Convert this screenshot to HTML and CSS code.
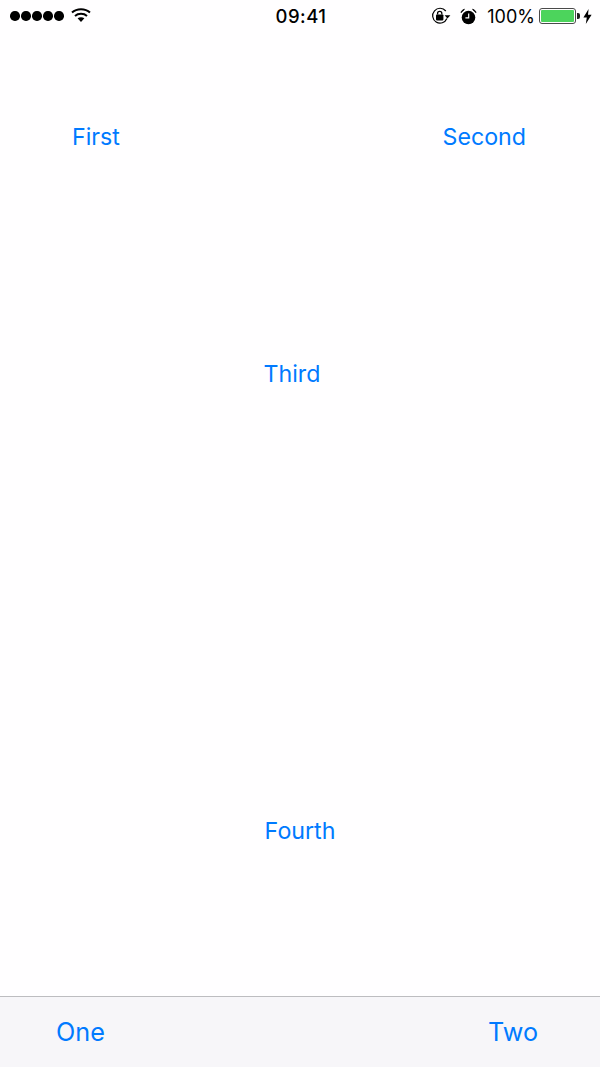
FILE: index.html
```html
<!DOCTYPE html>
<html lang="en">
<head>
    <meta charset="UTF-8">
    <meta name="viewport" content="width=device-width, initial-scale=1.0">
    <title>Buttons</title>
    <link rel="stylesheet" href="styles.css">
</head>
<body>
    <div class="status">
        <div class="status__left">
            <div class="dots"><i></i><i></i><i></i><i></i><i></i></div>
            <svg class="wifi" width="20" height="16" viewBox="0 0 20 16">
                <path d="M1 5.6C5.8 1.2 14.2 1.2 19 5.6" fill="none" stroke="#000" stroke-width="2"/>
                <path d="M4 8.9C7.2 6 12.8 6 16 8.9" fill="none" stroke="#000" stroke-width="2"/>
                <path d="M6.6 11.3C8.4 9.9 11.6 9.9 13.4 11.3L10 15Z" fill="#000"/>
            </svg>
        </div>
        <div class="status__time">09:41</div>
        <div class="status__right">
            <svg class="lock" width="20" height="18" viewBox="0 0 20 18">
                <path d="M15.9 11.5A7.4 7.4 0 1 1 14.8 4" fill="none" stroke="#000" stroke-width="1.2"/>
                <path d="M13.6 8.2H19.4L16.5 11.4Z" fill="#000"/>
                <rect x="5" y="7.4" width="7.4" height="6" rx="0.8" fill="#000"/>
                <path d="M6.6 7.6V6.2C6.6 3.7 10.8 3.7 10.8 6.2V7.6" fill="none" stroke="#000" stroke-width="1.3"/>
            </svg>
            <svg class="alarm" width="17" height="17" viewBox="0 0 17 17">
                <circle cx="8.5" cy="9.5" r="6.8" fill="#000"/>
                <path d="M1 4.6C1.4 2.8 2.8 1.6 4.4 1.4ZM16 4.6C15.6 2.8 14.2 1.6 12.6 1.4Z" fill="#000" stroke="#000"/>
                <path d="M8.7 5.4V9.9H5.4" fill="none" stroke="#fff" stroke-width="1.2"/>
            </svg>
            <span class="percent">100%</span>
            <div class="battery">
                <div class="battery__body"><div class="battery__level"></div></div>
                <div class="battery__tip"></div>
            </div>
            <svg class="bolt" width="9" height="15" viewBox="0 0 9 15">
                <path d="M5.6 0L0.4 8.4H3.8L2.8 15L8.6 5.8H5L5.6 0Z" fill="#000"/>
            </svg>
        </div>
    </div>

    <div class="content">
        <div class="row row--top">
            <button class="btn btn--first">First</button>
            <button class="btn btn--second">Second</button>
        </div>
        <div class="row row--third">
            <button class="btn">Third</button>
        </div>
        <div class="row row--fourth">
            <button class="btn">Fourth</button>
        </div>
    </div>

    <div class="toolbar">
        <button class="btn btn--bar">One</button>
        <button class="btn btn--bar">Two</button>
    </div>
</body>
</html>
```

FILE: styles.css
```css
*{
    margin: 0;
    padding: 0;
    box-sizing: border-box;
}

html, body {
    height: 100%;
}

body {
    display: flex;
    flex-direction: column;
    height: 1067px;
    overflow: hidden;
    background: #fffeff;
    font-family: Inter, "Liberation Sans", sans-serif;
}

/* status bar */
.status {
    display: grid;
    grid-template-columns: 1fr auto 1fr;
    align-items: center;
    height: 32px;
    padding: 0 8px 0 10px;
    color: #000;
}

.status__left {
    display: flex;
    align-items: center;
    gap: 7px;
}

.dots {
    display: flex;
    gap: 1.5px;
}

.dots i {
    display: block;
    width: 9.5px;
    height: 9.5px;
    border-radius: 50%;
    background: #000;
}

.wifi {
    margin-top: -2px;
}

.status__time {
    font-size: 18.5px;
    font-weight: 500;
    letter-spacing: 0.5px;
}

.status__right {
    display: flex;
    align-items: center;
    justify-content: flex-end;
}

.alarm {
    margin-left: 9px;
}

.percent {
    margin-left: 10px;
    font-size: 18px;
}

.battery {
    display: flex;
    align-items: center;
    margin-left: 4px;
}

.battery__body {
    width: 37px;
    height: 16px;
    padding: 1px;
    border: 1.5px solid #4a4a4a;
    border-radius: 3px;
}

.battery__level {
    height: 100%;
    border-radius: 1px;
    background: #4cd45c;
}

.battery__tip {
    width: 3px;
    height: 6px;
    margin-left: 1px;
    border-radius: 0 2px 2px 0;
    background: #222;
}

.bolt {
    margin-left: 3px;
}

/* buttons */
.content {
    flex: 1;
    display: flex;
    flex-direction: column;
}

.row {
    display: flex;
}

.row--top {
    justify-content: space-between;
    margin-top: 90px;
    padding: 0 74px 0 72px;
}

.row--third {
    margin-top: 207px;
    padding-left: 263.5px;
}

.row--fourth {
    margin-top: 427px;
    justify-content: center;
}

.btn {
    border: 0;
    background: none;
    font-family: inherit;
    font-size: 23.2px;
    line-height: 30px;
    color: #007aff;
}

.toolbar {
    display: flex;
    justify-content: space-between;
    align-items: center;
    height: 71px;
    padding: 0 62px 0 56px;
    border-top: 1px solid #bdbdc0;
    background: #f7f6f9;
}

.btn--bar {
    font-size: 25.2px;
}
```
